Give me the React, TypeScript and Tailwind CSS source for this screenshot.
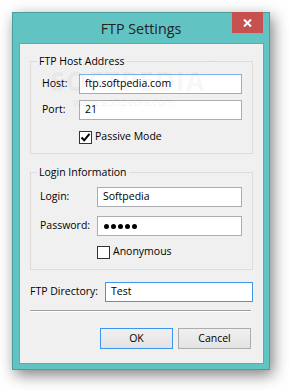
import React from "react";

const font = { fontFamily: '"Open Sans", "Noto Sans", "Liberation Sans", sans-serif' };

function TextBox({ children, active, strong, className = "" }: { children?: React.ReactNode; active?: boolean; strong?: boolean; className?: string }) {
  const border = strong ? "border-[#3c96f0]" : active ? "border-[#7eb4ea]" : "border-[#abadb3]";
  return (
    <div className={`h-[20px] flex-1 border ${border} bg-white flex items-center pl-[5px] text-[10.5px] text-black whitespace-nowrap ${className}`}>
      {children}
    </div>
  );
}

function CheckBox({ checked }: { checked?: boolean }) {
  return (
    <div className="w-[13px] h-[13px] border border-[#333333] bg-white flex items-center justify-center shrink-0">
      {checked && (
        <svg width="11" height="11" viewBox="0 0 11 11">
          <path d="M1.5 5.5 L4.2 8.3 L9.5 1.8" fill="none" stroke="#000" strokeWidth="2" />
        </svg>
      )}
    </div>
  );
}

export default function App() {
  return (
    <div className="relative w-[290px] h-[390px] bg-white pt-[12px] pl-[12px]" style={font}>
      <div className="relative w-[258px] h-[358px] bg-[#62c3c3] border border-[#4a9d9d] shadow-[3px_5px_14px_rgba(0,0,0,0.5)] flex flex-col">
        <div className="h-[30px] flex items-center justify-center text-[14.3px] text-[#222] pt-[1px]">FTP Settings</div>
        <div className="absolute top-[-1px] right-[6px] w-[31px] h-[21px] bg-[#c75050] flex items-center justify-center">
          <svg width="9" height="8" viewBox="0 0 9 8">
            <path d="M1 0.5 L8 7.5 M8 0.5 L1 7.5" stroke="#fff" strokeWidth="2" />
          </svg>
        </div>
        <div className="ml-[6px] mr-[5px] mb-[5px] flex-1 bg-[#f0f0f0] border border-[#56aeae] flex flex-col text-[10.5px] text-black whitespace-nowrap">
          <fieldset className="mx-[10px] mt-[9px] border border-[#dcdcdc]">
            <legend className="ml-[6px] px-[2px] leading-[16px]">FTP Host Address</legend>
            <div className="pl-[11px] pr-[10px] pt-[5px] pb-[8px] flex flex-col">
              <div className="flex items-center h-[20px]">
                <span className="w-[37px]">Host:</span>
                <TextBox active>ftp.softpedia.com</TextBox>
              </div>
              <div className="flex items-center h-[20px] mt-[6px]">
                <span className="w-[37px]">Port:</span>
                <TextBox>21</TextBox>
              </div>
              <div className="flex items-center h-[16px] mt-[9px] pl-[37px] gap-[3px]">
                <CheckBox checked />
                <span>Passive Mode</span>
              </div>
            </div>
          </fieldset>
          <fieldset className="mx-[10px] mt-[10px] border border-[#dcdcdc]">
            <legend className="ml-[6px] px-[2px] leading-[16px]">Login Information</legend>
            <div className="pl-[9px] pr-[10px] pt-[7px] pb-[9px] flex flex-col">
              <div className="flex items-center h-[20px]">
                <span className="w-[57px]">Login:</span>
                <TextBox>Softpedia</TextBox>
              </div>
              <div className="flex items-center h-[20px] mt-[9px]">
                <span className="w-[57px]">Password:</span>
                <TextBox>
                  <div className="flex gap-[2px] ml-[1px]">
                    <span className="w-[5px] h-[5px] rounded-full bg-black" />
                    <span className="w-[5px] h-[5px] rounded-full bg-black" />
                    <span className="w-[5px] h-[5px] rounded-full bg-black" />
                    <span className="w-[5px] h-[5px] rounded-full bg-black" />
                    <span className="w-[5px] h-[5px] rounded-full bg-black" />
                  </div>
                </TextBox>
              </div>
              <div className="flex items-center h-[16px] mt-[8px] pl-[57px] gap-[3px]">
                <CheckBox />
                <span>Anonymous</span>
              </div>
            </div>
          </fieldset>
          <div className="flex items-center h-[20px] mt-[12px] ml-[10px] mr-[10px]">
            <span className="w-[75px]">FTP Directory:</span>
            <TextBox strong>Test</TextBox>
          </div>
          <div className="mt-[8px] ml-[10px] mr-[12px] h-[2px] border-t border-[#a0a0a0] border-b border-b-white" />
          <div className="mt-[16px] mr-[12px] flex justify-end gap-[5px]">
            <button className="w-[73px] h-[21px] border border-[#3c96f0] bg-gradient-to-b from-[#f0f0f0] to-[#e3e3e3] text-[10.5px] text-black">OK</button>
            <button className="w-[73px] h-[21px] border border-[#adadad] bg-gradient-to-b from-[#f0f0f0] to-[#e3e3e3] text-[10.5px] text-black">Cancel</button>
          </div>
        </div>
      </div>
      <div className="absolute left-[50px] top-[66px] pointer-events-none select-none">
        <div className="text-[27px] font-bold tracking-[1px] leading-[30px] text-black/[0.05]">SOFTPEDIA<sup className="text-[8px] align-top">™</sup></div>
        <div className="ml-[23px] text-[11px] leading-[12px] text-black/[0.08]">www.softpedia.com</div>
      </div>
    </div>
  );
}
